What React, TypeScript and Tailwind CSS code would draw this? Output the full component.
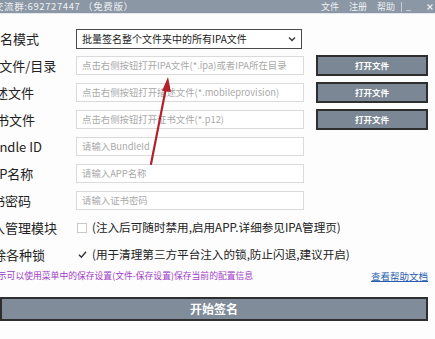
import React from 'react';

const font = { fontFamily: '"Noto Sans CJK SC", "Noto Sans", sans-serif' };

type Row = {
  label: string;
  shift: string;
  placeholder?: string;
  button?: boolean;
};

const rows: Row[] = [
  { label: 'IPA文件/目录', shift: '-ml-[20px]', placeholder: '点击右侧按钮打开IPA文件(*.ipa)或者IPA所在目录', button: true },
  { label: '描述文件', shift: '-ml-[18px]', placeholder: '点击右侧按钮打开描述文件(*.mobileprovision)', button: true },
  { label: '证书文件', shift: '-ml-[17px]', placeholder: '点击右侧按钮打开证书文件(*.p12)', button: true },
  { label: 'Bundle ID', shift: '-ml-[17px]', placeholder: '请输入BundleId' },
  { label: 'APP名称', shift: '-ml-[17px]', placeholder: '请输入APP名称' },
  { label: '证书密码', shift: '-ml-[21px]', placeholder: '请输入证书密码' },
];

function Label({ text, shift }: { text: string; shift: string }) {
  return (
    <div className="w-[76px] shrink-0 overflow-hidden">
      <div className={`${shift} whitespace-nowrap text-[13px] text-[#222]`}>{text}</div>
    </div>
  );
}

export default function App() {
  return (
    <div style={font} className="relative w-[435px] h-[339px] overflow-hidden bg-[#fdfdfd]">
      {/* title bar */}
      <div className="h-[13px] bg-[#8b97a5] flex items-center text-[9px] text-[#eef1f4] leading-none">
        <div className="-ml-[6px] whitespace-nowrap tracking-[0.6px] text-[9.5px]">交流群:692727447 （免费版）</div>
        <div className="ml-auto flex items-center pr-[2px]">
          <span className="mr-[10px]">文件</span>
          <span className="mr-[10px]">注册</span>
          <span className="mr-[6px]">帮助</span>
          <span className="w-px h-[10px] bg-[#c4ccd4] mr-[4px]" />
          <span className="mr-[16px]">_</span>
          <svg width="6" height="6" viewBox="0 0 6 6">
            <path d="M0.5 0.5 L5.5 5.5 M5.5 0.5 L0.5 5.5" stroke="#eef1f4" strokeWidth="1.1" />
          </svg>
        </div>
      </div>
      <div className="h-px bg-[#e4e8ec]" />

      <div className="pt-[11px] pr-[7px]">
        {/* mode */}
        <div className="h-[27px] flex items-center">
          <Label text="签名模式" shift="-ml-[13px]" />
          <div className="w-[226px] h-[20px] border border-[#4a4a4a] bg-white flex items-center px-[5px] text-[10px] text-[#222]">
            <span className="whitespace-nowrap">批量签名整个文件夹中的所有IPA文件</span>
            <svg className="ml-auto" width="8" height="6" viewBox="0 0 8 6">
              <path d="M1 1.5 L4 4.5 L7 1.5" fill="none" stroke="#333" strokeWidth="1.3" />
            </svg>
          </div>
        </div>

        {rows.map((r) => (
          <div key={r.label} className="h-[27px] flex items-center">
            <Label text={r.label} shift={r.shift} />
            <div className="w-[228px] h-[19px] border border-[#dadada] bg-white flex items-center px-[5px] text-[9.4px] text-[#a9a9a9] whitespace-nowrap overflow-hidden">
              {r.placeholder}
            </div>
            {r.button && (
              <div className="ml-auto w-[112px] h-[21px] bg-[#7b8795] border-2 border-[#2e2e2e] flex items-center justify-center text-[8.5px] text-white font-bold">
                打开文件
              </div>
            )}
          </div>
        ))}

        <div className="h-[27px] flex items-center">
          <Label text="注入管理模块" shift="-ml-[21px]" />
          <span className="ml-[1px] w-[10px] h-[10px] border border-[#c9c9c9] bg-white" />
          <span className="ml-[5px] whitespace-nowrap text-[11.6px] text-[#222]">(注入后可随时禁用,启用APP.详细参见IPA管理页)</span>
        </div>

        <div className="h-[27px] flex items-center">
          <Label text="清除各种锁" shift="-ml-[20px]" />
          <svg className="ml-[2px]" width="9" height="9" viewBox="0 0 9 9">
            <path d="M1 4.8 L3.4 7.2 L8 1.8" fill="none" stroke="#333" strokeWidth="1.4" />
          </svg>
          <span className="ml-[5px] whitespace-nowrap text-[11.6px] text-[#222]">(用于清理第三方平台注入的锁,防止闪退,建议开启)</span>
        </div>

        <div className="h-[16px] flex items-center text-[8.8px]">
          <span className="-ml-[11px] whitespace-nowrap text-[#a03cc8]">提示可以使用菜单中的保存设置(文件-保存设置)保存当前的配置信息</span>
          <span className="ml-auto text-[#2a5db0] underline whitespace-nowrap text-[9.5px]">查看帮助文档</span>
        </div>

        <div className="mt-[13px] h-[24px] bg-[#808c99] border-2 border-[#2e2e2e] flex items-center justify-center text-[12px] text-white font-bold">
          开始签名
        </div>
      </div>

      {/* red annotation arrow */}
      <svg className="absolute left-0 top-0 pointer-events-none" width="435" height="339">
        <line x1="151" y1="164" x2="166" y2="88" stroke="#b3222c" strokeWidth="2.2" strokeLinecap="round" />
        <path d="M168 77 L162 91 L171 92 Z" fill="#b3222c" />
      </svg>
    </div>
  );
}
